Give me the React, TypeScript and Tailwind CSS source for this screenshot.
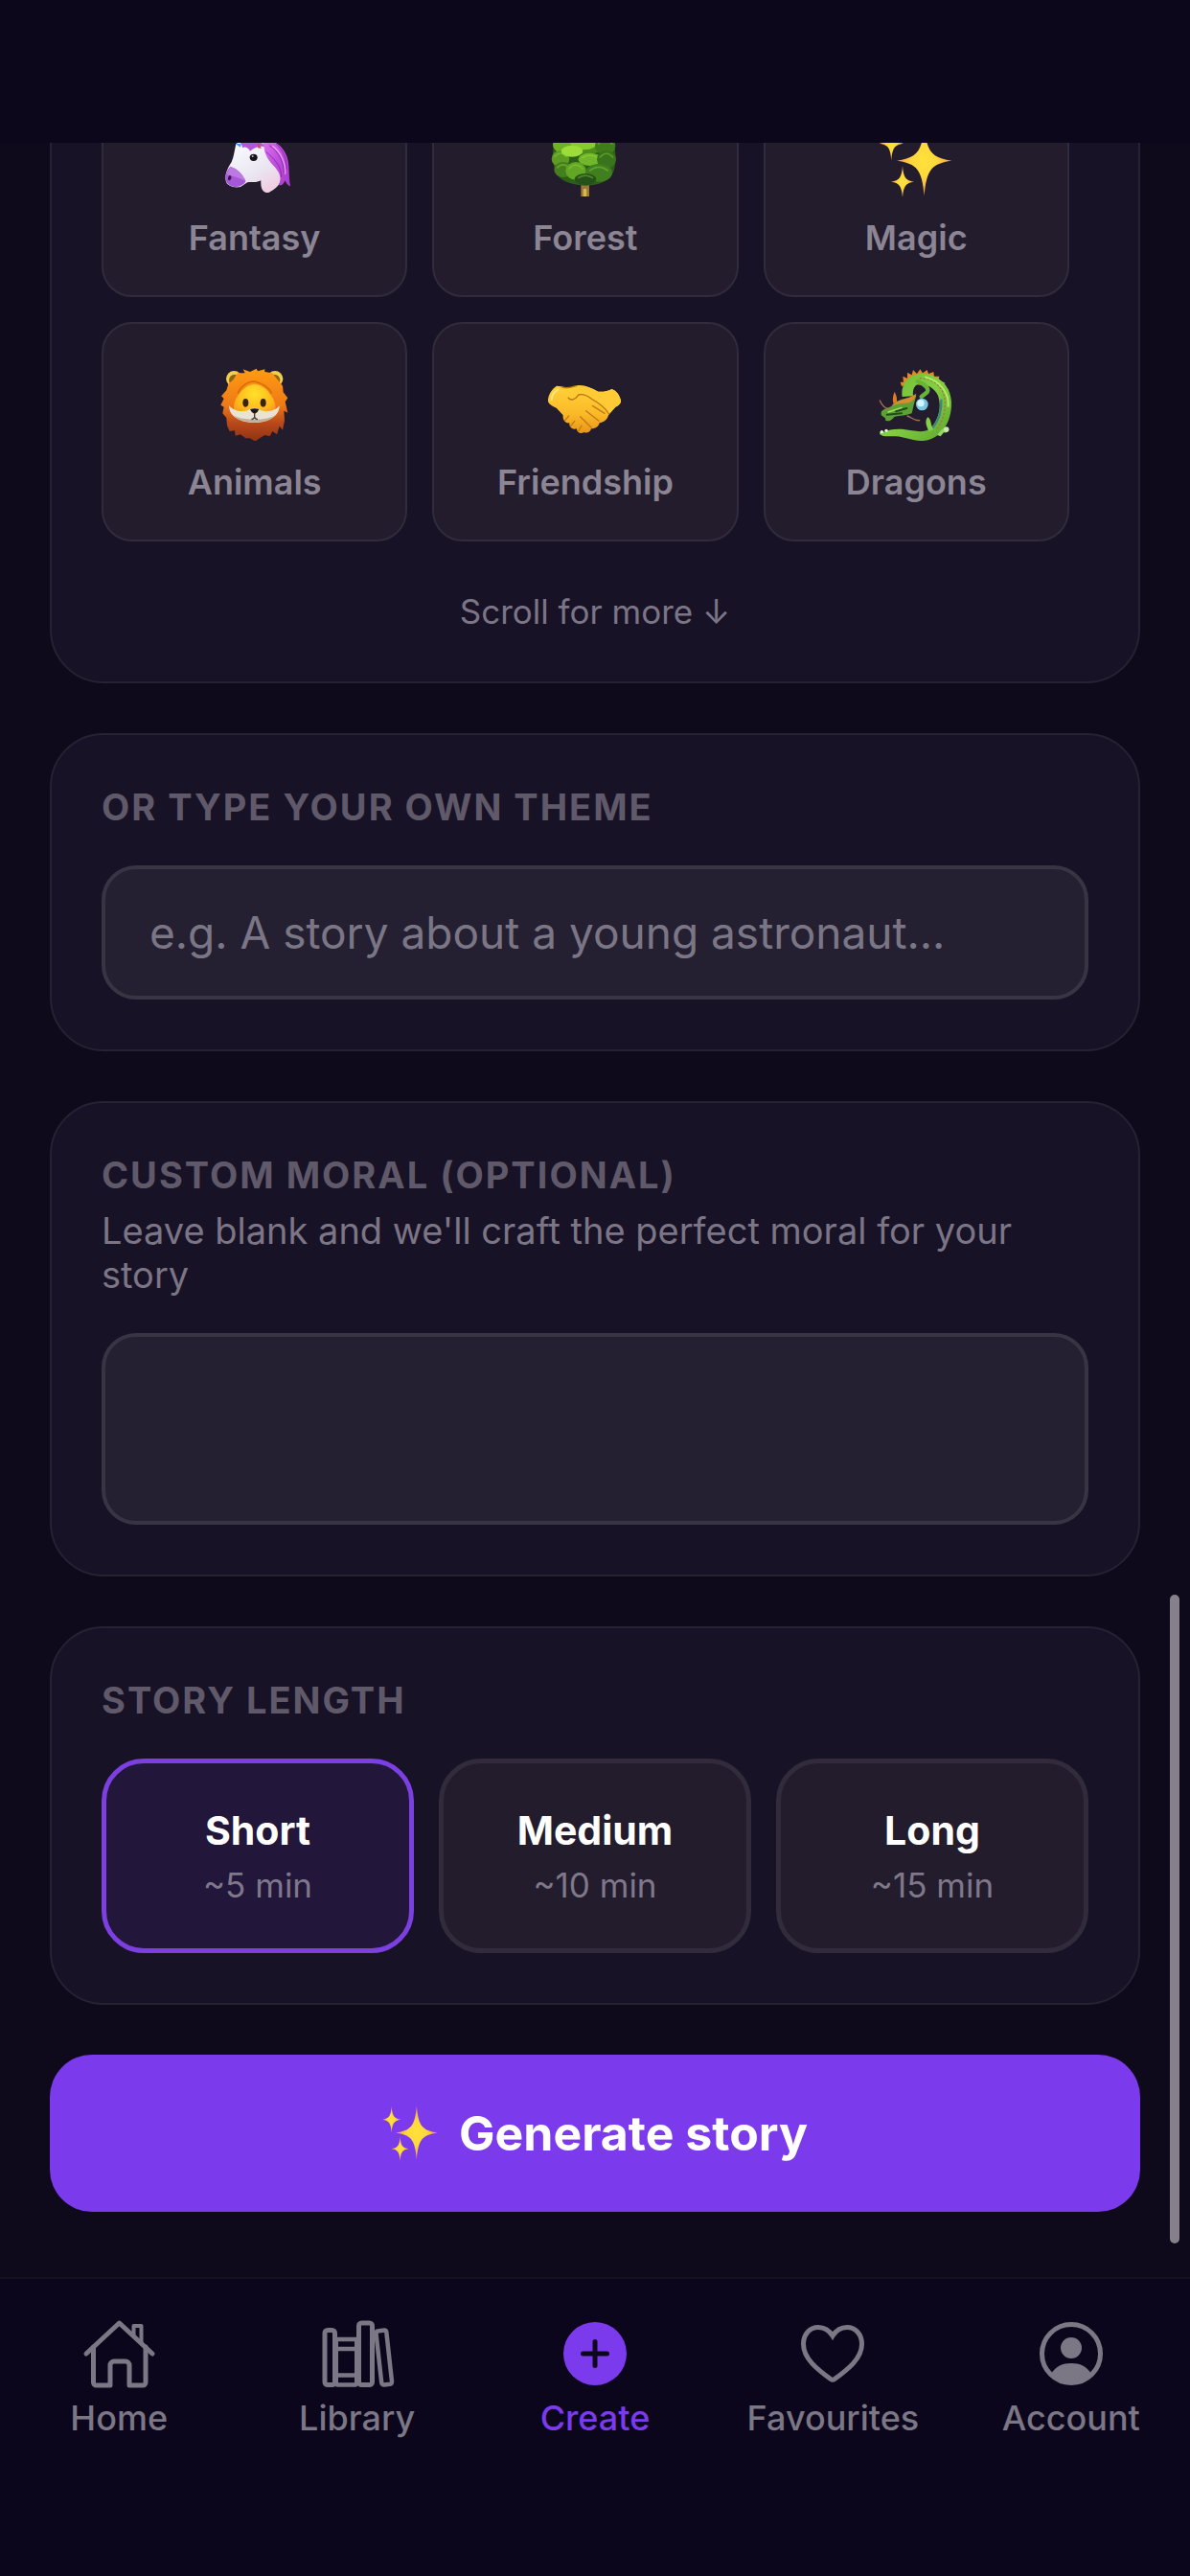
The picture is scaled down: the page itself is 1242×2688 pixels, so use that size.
import { useState, type ReactNode } from "react";

function Star({ x, y, rx, ry }: { x: number; y: number; rx: number; ry: number }) {
  const nx = rx * 0.08;
  const fx = rx * 0.26;
  const ny = ry * 0.08;
  const fy = ry * 0.26;
  return (
    <path
      fill="url(#star)"
      d={`M${x} ${y - ry} C${x + nx} ${y - fy} ${x + fx} ${y - ny} ${x + rx} ${y} C${x + fx} ${y + ny} ${x + nx} ${y + fy} ${x} ${y + ry} C${x - nx} ${y + fy} ${x - fx} ${y + ny} ${x - rx} ${y} C${x - fx} ${y - ny} ${x - nx} ${y - fy} ${x} ${y - ry} Z`}
    />
  );
}

function Sparkles({ viewBox, className }: { viewBox: string; className: string }) {
  return (
    <svg viewBox={viewBox} className={className} aria-hidden="true">
      <defs>
        <radialGradient id="star">
          <stop offset="0" stopColor="#ffe13a" />
          <stop offset="0.45" stopColor="#ffd83c" />
          <stop offset="1" stopColor="#f09a4a" />
        </radialGradient>
      </defs>
      <Star x={221} y={80} rx={86} ry={110} />
      <Star x={153} y={146} rx={36} ry={50} />
      <Star x={118} y={26} rx={38} ry={54} />
    </svg>
  );
}

function Unicorn() {
  return (
    <svg viewBox="75 -36 240 228" className="h-[76px] w-20" aria-hidden="true">
      <defs>
        <linearGradient id="uniFace" x1="0" y1="0" x2="0.6" y2="1">
          <stop offset="0" stopColor="#ffffff" />
          <stop offset="0.7" stopColor="#e9e6f2" />
          <stop offset="1" stopColor="#f0cfe3" />
        </linearGradient>
        <linearGradient id="uniMane" x1="0" y1="0" x2="1" y2="1">
          <stop offset="0" stopColor="#e07af0" />
          <stop offset="0.5" stopColor="#c04fdc" />
          <stop offset="1" stopColor="#a93ccb" />
        </linearGradient>
      </defs>
      <path d="M105 -30 L170 20 L150 36 Z" fill="#4fa8f0" />
      <path d="M205 -20 L218 38 L196 40 Z" fill="#d8455c" />
      <path
        d="M136 27 C170 8 214 8 244 34 C262 60 268 100 276 128 C280 150 262 168 238 180 C224 182 212 172 214 142 C200 150 186 146 172 148 L150 162 C130 166 106 160 104 142 C100 124 110 102 122 84 C130 66 132 44 136 27 Z"
        fill="url(#uniFace)"
      />
      <path
        d="M118 98 C108 110 100 126 104 142 C110 160 132 166 148 160 C158 154 166 150 166 144 C158 122 138 104 118 98 Z"
        fill="#a558d6"
      />
      <path d="M118 98 C138 104 158 122 166 144 C152 136 128 128 106 124 Z" fill="#c487e6" opacity="0.7" />
      <ellipse cx="116" cy="134" rx="5" ry="8" fill="#40104f" transform="rotate(18 116 134)" />
      <ellipse cx="191" cy="70" rx="12" ry="11" fill="#17131b" />
      <circle cx="188" cy="66" r="3" fill="#b9b4c0" />
      <path
        d="M214 6 C256 14 286 36 296 70 C304 92 300 124 306 160 C298 158 292 150 290 142 C284 156 276 160 270 156 C282 130 268 112 256 98 C240 84 226 62 224 40 Z"
        fill="url(#uniMane)"
      />
      <path d="M240 32 C270 52 286 84 286 118 M230 52 C252 72 280 96 278 132 M262 28 C284 46 296 78 294 108" stroke="#8f2db4" strokeWidth="3" fill="none" />
      <path d="M250 34 C276 52 292 88 290 122" stroke="#ec9df7" strokeWidth="4" fill="none" />
      <path d="M140 14 C176 4 210 10 226 36 C206 32 192 40 180 50 C176 40 164 34 156 40 C156 30 150 24 140 14 Z" fill="#b355dc" />
      <path d="M205 24 L216 42 L204 40 Z" fill="#d8455c" />
      <path d="M134 27 L152 27 L150 38 Z" fill="#3f9cf2" />
    </svg>
  );
}

function Tree() {
  const leaves: [number, number, number, number, string][] = [
    [208, 0, 92, 60, "#4f8d1c"],
    [142, 30, 34, 26, "#6fb324"],
    [206, 20, 44, 26, "#86cc2e"],
    [272, 34, 32, 28, "#3f7d1a"],
    [132, 74, 28, 26, "#5c9c22"],
    [168, 50, 34, 18, "#9bdc3a"],
    [224, 76, 36, 20, "#72b62a"],
    [276, 76, 30, 28, "#39731b"],
    [140, 108, 28, 24, "#457f1d"],
    [180, 112, 32, 28, "#62a626"],
    [252, 118, 42, 28, "#3f7f20"],
    [210, 138, 34, 18, "#25511a"],
  ];
  return (
    <svg viewBox="90 -36 240 228" className="h-[76px] w-20" aria-hidden="true">
      <rect x="196" y="150" width="26" height="46" rx="5" fill="#9c7634" />
      <rect x="203" y="168" width="11" height="26" rx="3" fill="#d9b45f" />
      <path
        d="M120 10 C102 40 106 90 118 116 C128 142 160 154 208 158 C252 158 286 146 298 114 C308 86 306 40 294 8 C270 -30 150 -32 120 10 Z"
        fill="#2c5e18"
      />
      {leaves.map(([cx, cy, rx, ry, fill]) => (
        <g key={`${cx}-${cy}`}>
          <ellipse cx={cx} cy={cy} rx={rx} ry={ry} fill={fill} />
          <path
            d={`M${cx - rx * 0.7} ${cy - ry * 0.2} Q${cx} ${cy - ry * 1.1} ${cx + rx * 0.7} ${cy - ry * 0.2}`}
            stroke="#a5e542"
            strokeOpacity="0.35"
            strokeWidth="5"
            fill="none"
          />
        </g>
      ))}
    </svg>
  );
}

function Lion() {
  return (
    <svg viewBox="75 42 240 228" className="h-[76px] w-20" aria-hidden="true">
      <defs>
        <linearGradient id="mane" x1="0" y1="0" x2="0" y2="1">
          <stop offset="0" stopColor="#ff9c12" />
          <stop offset="0.5" stopColor="#ee7a16" />
          <stop offset="0.75" stopColor="#b8481a" />
          <stop offset="1" stopColor="#8f3214" />
        </linearGradient>
        <radialGradient id="lionFace" cx="0.5" cy="0.25" r="0.75">
          <stop offset="0" stopColor="#ffe02a" />
          <stop offset="0.6" stopColor="#ffb81c" />
          <stop offset="1" stopColor="#f5871c" />
        </radialGradient>
      </defs>
      <circle cx="130" cy="76" r="25" fill="#f2cf4a" />
      <circle cx="132" cy="80" r="18" fill="#8d6416" />
      <circle cx="258" cy="76" r="25" fill="#f2cf4a" />
      <circle cx="256" cy="80" r="18" fill="#8d6416" />
      <path
        d="M158 46 L180 54 L200 44 L204 52 L226 46 L226 54 L250 58 L264 76 L282 98 L284 118 L298 136 L290 148 L298 182 L286 176 L288 206 L282 236 L272 224 L264 250 L250 240 L242 256 L226 252 L210 262 L196 272 L180 262 L166 262 L150 250 L134 254 L132 238 L116 240 L108 222 L106 198 L94 184 L98 164 L88 158 L98 138 L90 130 L106 112 L112 92 L128 78 L140 58 L164 58 Z"
        fill="url(#mane)"
      />
      <path
        d="M194 92 C164 96 146 118 134 142 C124 164 128 190 148 204 C168 216 220 216 240 204 C260 190 264 164 254 142 C242 118 224 96 194 92 Z"
        fill="url(#lionFace)"
      />
      <path
        d="M114 160 C130 178 160 184 180 170 C188 165 198 165 206 170 C228 184 258 178 272 160 C272 186 252 204 220 210 C202 214 184 214 166 210 C134 204 114 186 114 160 Z"
        fill="#eae2d3"
      />
      <path d="M126 188 C150 208 238 208 260 188 C246 206 222 211 194 212 C164 211 140 206 126 188 Z" fill="#bdb19e" />
      <ellipse cx="166" cy="151" rx="9" ry="13" fill="#3a2406" />
      <ellipse cx="221" cy="151" rx="9" ry="13" fill="#3a2406" />
      <path d="M180 171 Q194 166 208 171 Q204 182 194 186 Q184 182 180 171 Z" fill="#1d1518" />
      <path d="M194 184 V196 M184 203 Q192 202 194 196 Q196 202 204 203" stroke="#4a3a34" strokeWidth="4" fill="none" />
      <path d="M194 84 C170 84 148 102 142 122 M194 84 C218 90 240 104 248 122" stroke="#d96c0a" strokeWidth="5" fill="none" />
    </svg>
  );
}

function Handshake() {
  return (
    <svg viewBox="90 42 240 228" className="h-[76px] w-20" aria-hidden="true">
      <defs>
        <linearGradient id="hand" x1="0" y1="0" x2="0" y2="1">
          <stop offset="0" stopColor="#ffd23a" />
          <stop offset="0.6" stopColor="#fbb928" />
          <stop offset="1" stopColor="#e8951a" />
        </linearGradient>
      </defs>
      <path
        d="M120 98 C104 108 92 128 93 146 C96 158 112 162 120 168 L140 190 C138 206 148 216 160 214 C158 228 170 236 182 232 C184 246 196 250 206 243 C216 248 226 242 228 232 C244 232 252 224 254 214 C268 212 278 204 282 190 L304 164 C316 158 324 150 320 140 C316 126 306 112 292 108 C284 114 264 118 250 116 C230 104 206 94 186 97 C170 104 146 106 134 100 Z"
        fill="url(#hand)"
      />
      <path
        d="M186 97 C168 104 158 120 156 134 C162 146 178 142 188 126 C204 122 216 128 228 138 C250 150 270 164 284 186 L304 164 C316 158 324 150 320 140 C316 126 306 112 292 108 C284 114 264 118 250 116 C230 104 206 94 186 97 Z"
        fill="#ffcb34"
      />
      <path d="M156 134 C162 146 178 142 188 126 C204 122 216 128 228 138 C250 150 270 162 284 186" stroke="#bb7412" strokeWidth="4" fill="none" />
      <path
        d="M232 160 L270 184 M212 176 L252 208 M194 194 L228 228 M176 208 L164 224 M198 222 L188 240 M158 192 L146 206 M134 100 C150 108 166 104 180 98"
        stroke="#c07a14"
        strokeWidth="4"
        strokeLinecap="round"
        fill="none"
      />
      <path d="M124 110 C110 118 104 132 104 142" stroke="#ffe680" strokeWidth="6" strokeLinecap="round" fill="none" />
    </svg>
  );
}

function Dragon() {
  return (
    <svg viewBox="75 42 240 228" className="h-[76px] w-20" aria-hidden="true">
      <defs>
        <linearGradient id="scales" x1="0" y1="0" x2="1" y2="1">
          <stop offset="0" stopColor="#6cbb35" />
          <stop offset="0.5" stopColor="#83cf42" />
          <stop offset="1" stopColor="#5ca42e" />
        </linearGradient>
      </defs>
      <path
        d="M150 100 L146 86 L156 86 L154 68 L168 74 L168 56 L182 64 L186 48 L198 60 L208 46 L216 58 L230 48 L234 60 L250 54 L252 68 L268 68 L266 82 L286 88 L280 100 L298 110 L290 120 L304 132 L240 100 L170 90 Z"
        fill="#e08a25"
      />
      <path
        d="M152 132 C146 96 168 66 206 60 C262 56 304 96 306 148 C308 200 284 254 232 268 C196 276 166 258 132 256 C112 254 96 260 82 250 C78 240 90 238 96 242 C112 232 150 230 182 238 C206 242 226 242 240 232 C266 204 276 166 264 128 C252 104 226 88 202 92 C188 98 184 112 186 130 Z"
        fill="url(#scales)"
      />
      <path d="M206 74 C252 74 286 104 286 152 C286 188 276 214 258 236" stroke="#a8763a" strokeWidth="4" strokeDasharray="7 5" fill="none" />
      <path d="M222 70 C272 82 300 122 296 164" stroke="#b3ea6a" strokeWidth="6" fill="none" />
      <path d="M274 140 C276 176 264 210 246 232" stroke="#3f8580" strokeWidth="7" fill="none" />
      <path d="M200 84 C222 92 238 106 230 118 L212 132" stroke="#68b43a" strokeWidth="13" strokeLinecap="round" fill="none" />
      <circle cx="214" cy="156" r="19" fill="#79c6e0" />
      <circle cx="210" cy="152" r="11" fill="#d3f4fb" />
      <path d="M236 240 C226 224 222 206 232 196 C244 202 240 222 250 234 Z" fill="#86cf48" />
      <path d="M262 252 C272 236 282 226 294 228 C304 236 296 246 282 244 L272 256 Z" fill="#94d66a" />
      <circle cx="290" cy="234" r="8" fill="#c8eaa4" />
      <circle cx="88" cy="242" r="5" fill="#eef6dc" />
      <circle cx="102" cy="238" r="5" fill="#eef6dc" />
      <path
        d="M86 180 C94 168 112 168 120 160 C132 146 152 138 172 136 L196 128 C190 148 186 166 182 184 C166 190 146 192 128 194 C118 208 104 212 98 204 C104 198 92 196 86 188 Z"
        fill="#5da136"
      />
      <path d="M120 158 C140 138 164 144 196 122 C192 142 180 152 160 152 C144 152 132 158 120 158 Z" fill="#d98a2e" />
      <path d="M124 152 C120 138 124 126 128 116 C136 130 136 142 134 152 Z" fill="#dc7d22" />
      <path d="M132 178 L166 168 M104 188 L150 184" stroke="#1f4d16" strokeWidth="6" strokeLinecap="round" />
      <path d="M108 180 L150 166" stroke="#a4df62" strokeWidth="4" strokeLinecap="round" />
      <path d="M112 170 C98 170 88 158 82 144 M168 192 C180 196 190 208 206 206" stroke="#a5705c" strokeWidth="4" strokeLinecap="round" fill="none" />
    </svg>
  );
}

const themes: { name: string; art: ReactNode }[] = [
  { name: "Fantasy", art: <Unicorn /> },
  { name: "Forest", art: <Tree /> },
  { name: "Magic", art: <Sparkles viewBox="75 -36 240 228" className="h-[76px] w-20" /> },
  { name: "Animals", art: <Lion /> },
  { name: "Friendship", art: <Handshake /> },
  { name: "Dragons", art: <Dragon /> },
];

const lengths = [
  { name: "Short", time: "~5 min" },
  { name: "Medium", time: "~10 min" },
  { name: "Long", time: "~15 min" },
];

function NavIcon({ children }: { children: ReactNode }) {
  return (
    <svg
      viewBox="0 0 80 76"
      className="h-[76px] w-20"
      fill="none"
      stroke="currentColor"
      strokeWidth="5"
      strokeLinecap="round"
      strokeLinejoin="round"
      aria-hidden="true"
    >
      {children}
    </svg>
  );
}

const tabs: { name: string; icon: ReactNode }[] = [
  {
    name: "Home",
    icon: (
      <NavIcon>
        <path d="M6 38 L40.5 6 L75 38" />
        <path d="M13.5 31 V68 a3 3 0 0 0 3 3 H31 V50 a4 4 0 0 1 4 -4 h12 a4 4 0 0 1 4 4 V71 H65 a3 3 0 0 0 3 -3 V31" />
        <path d="M55.5 19 V9 H63.5 V26" strokeWidth="4" />
      </NavIcon>
    ),
  },
  {
    name: "Library",
    icon: (
      <NavIcon>
        <rect x="6" y="13.5" width="10.5" height="57" rx="3" />
        <path d="M17.5 23 H39 M17.5 33 H39 M17.5 60.5 H39 M19 70.5 H38" strokeWidth="4.5" />
        <path d="M18 23 V70 M39 23 V70" strokeWidth="4" />
        <rect x="41.5" y="6" width="14" height="64.5" rx="3" />
        <path d="M61 14.5 L68 13.5 Q70 13.5 70.3 15.5 L76 67 Q76 69.5 74 69.8 L68 70.5 Q65.5 70.5 65.2 68 L59.5 17 Q59.5 14.8 61 14.5 Z" strokeWidth="4.5" />
      </NavIcon>
    ),
  },
  {
    name: "Create",
    icon: (
      <NavIcon>
        <circle cx="40" cy="38" r="33" fill="currentColor" stroke="none" />
        <path d="M27.5 38 H52.5 M40 25.5 V50.5" stroke="#0d071c" />
      </NavIcon>
    ),
  },
  {
    name: "Favourites",
    icon: (
      <NavIcon>
        <path
          strokeLinejoin="miter"
          d="M40 19.5 C36 13 30.5 10.5 25 10.5 C16 10.5 9.5 18 9.5 28 C9.5 43 24 54.5 38 64.5 Q40 66 42 64.5 C56 54.5 70.5 43 70.5 28 C70.5 18 64 10.5 55 10.5 C49.5 10.5 44 13 40 19.5 Z"
        />
      </NavIcon>
    ),
  },
  {
    name: "Account",
    icon: (
      <NavIcon>
        <circle cx="40" cy="38" r="30.5" />
        <circle cx="40" cy="32" r="11" fill="currentColor" stroke="none" />
        <path d="M19 59 C24 51 31 48 40 48 S56 51 61 59 A30 30 0 0 1 19 59 Z" fill="currentColor" stroke="none" />
      </NavIcon>
    ),
  },
];

const card = "shrink-0 rounded-[56px] border-2 border-[#272133] bg-[#181226] p-[52px]";
const heading = "text-[38px] leading-[46px] font-bold tracking-[2px] text-[#5f596a] uppercase";
const field = "block w-full rounded-[36px] border-4 border-[#393444] bg-[#252031] px-[46px] text-[46px] text-white outline-none placeholder:text-[#7b7685]";

export default function App() {
  const [length, setLength] = useState("Short");

  return (
    <div className="flex h-screen flex-col bg-[#0e091b] font-['Inter','Liberation_Sans',sans-serif]">
      <header className="h-[149px] shrink-0 bg-[#0d071c]" />

      <main className="relative flex min-h-0 flex-1 flex-col justify-end gap-[52px] overflow-hidden px-[52px] pb-[68px]">
        <section className={card}>
          <div className="flex flex-wrap gap-[26px]">
            {themes.map((theme) => (
              <button
                key={theme.name}
                type="button"
                className="flex w-[31%] flex-col items-center gap-[22px] rounded-[32px] border-2 border-[#312b3c] bg-[#221c2d] pt-[46px] pb-[39px] text-[36px] leading-[42px] font-semibold text-[#8b8594]"
              >
                {theme.art}
                {theme.name}
              </button>
            ))}
          </div>
          <p className="mt-[52px] text-center text-[35px] leading-[42px] text-[#7b7585]">Scroll for more ↓</p>
        </section>

        <section className={card}>
          <label htmlFor="theme" className={`block ${heading}`}>
            Or type your own theme
          </label>
          <input id="theme" type="text" placeholder="e.g. A story about a young astronaut..." className={`${field} mt-[38px] h-[140px]`} />
        </section>

        <section className={card}>
          <label htmlFor="moral" className={`block ${heading}`}>
            Custom moral (optional)
          </label>
          <p className="mt-3 text-[38px] leading-[46px] text-[#7b7585]">Leave blank and we'll craft the perfect moral for your story</p>
          <textarea id="moral" className={`${field} mt-[38px] h-[200px] resize-none py-9`} />
        </section>

        <fieldset className={card}>
          <legend className={`float-left w-full ${heading}`}>Story length</legend>
          <div className="clear-both grid grid-cols-3 gap-[26px] pt-[38px]">
            {lengths.map((option) => (
              <label
                key={option.name}
                className="flex cursor-pointer flex-col items-center gap-2 rounded-[44px] border-[5px] border-[#312b3c] bg-[#221c2d] pt-[45px] pb-[42px] has-checked:border-[#7b40df] has-checked:bg-[#23163b]"
              >
                <input
                  type="radio"
                  name="length"
                  className="sr-only"
                  checked={length === option.name}
                  onChange={() => setLength(option.name)}
                />
                <span className="text-[41px] leading-[50px] font-bold text-white">{option.name}</span>
                <span className="text-[35px] leading-[48px] text-[#7f788b]">{option.time}</span>
              </label>
            ))}
          </div>
        </fieldset>

        <button
          type="button"
          className="flex h-[164px] shrink-0 items-center justify-center gap-[22px] rounded-[44px] bg-[#7c3aed] text-[50px] font-bold text-white"
        >
          <Sparkles viewBox="80 -30 228 224" className="h-[58px] w-[58px]" />
          Generate story
        </button>

        <div className="absolute right-[11px] bottom-[35px] h-[677px] w-[10px] rounded-full bg-[#858089]" />
      </main>

      <nav className="grid h-[312px] shrink-0 grid-cols-5 content-start border-t-2 border-[#151022] bg-[#0c061c] pt-10">
        {tabs.map((tab) => (
          <a
            key={tab.name}
            href={`#${tab.name.toLowerCase()}`}
            aria-current={tab.name === "Create" ? "page" : undefined}
            className="flex flex-col items-center gap-2 text-[36px] leading-[42px] font-medium text-[#7c7785] aria-[current=page]:text-[#7c3aed]"
          >
            {tab.icon}
            {tab.name}
          </a>
        ))}
      </nav>
    </div>
  );
}
